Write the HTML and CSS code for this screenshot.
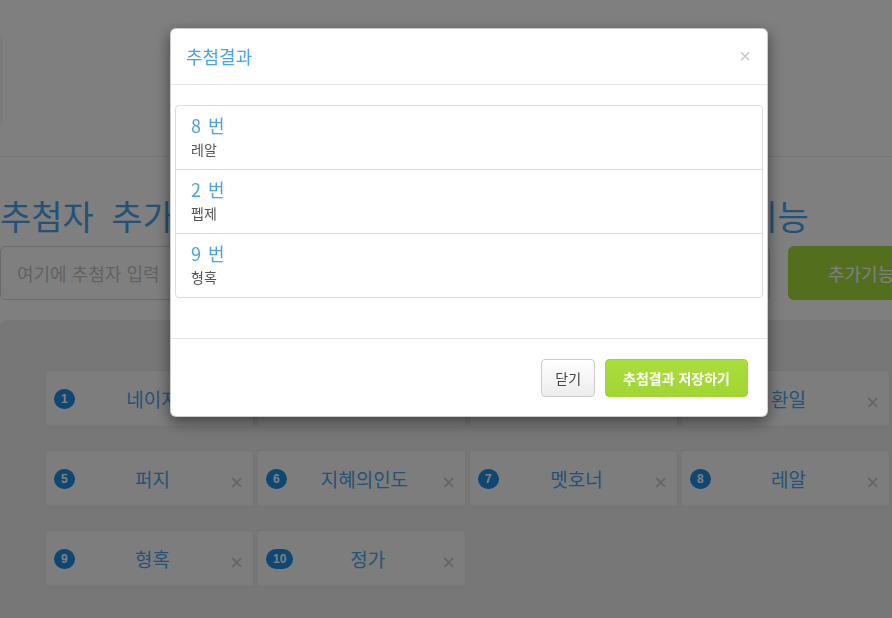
FILE: index.html
```html
<!DOCTYPE html>
<html lang="ko">
<head>
<meta charset="utf-8">
<title>추첨</title>
<link rel="stylesheet" href="styles.css">
</head>
<body>
<div class="page">
  <div class="top"><div class="strip"></div></div>
  <div class="divider"></div>
  <h1 class="title">추첨자 추가하기 - 이름을 입력 뒤에 추첨 및 추가기능</h1>
  <div class="add-row">
    <input class="name-input" type="text" placeholder="여기에 추첨자 입력">
    <button class="btn-extra">추가기능</button>
  </div>
  <div class="board">
    <div class="cards">
      <div class="card"><span class="badge">1</span><span class="name">네이지</span><span class="x">×</span></div>
      <div class="card"><span class="badge">2</span><span class="name">펩제</span><span class="x">×</span></div>
      <div class="card"><span class="badge">3</span><span class="name">하루</span><span class="x">×</span></div>
      <div class="card"><span class="badge">4</span><span class="name">환일</span><span class="x">×</span></div>
      <div class="card"><span class="badge">5</span><span class="name">퍼지</span><span class="x">×</span></div>
      <div class="card"><span class="badge">6</span><span class="name">지혜의인도</span><span class="x">×</span></div>
      <div class="card"><span class="badge">7</span><span class="name">멧호너</span><span class="x">×</span></div>
      <div class="card"><span class="badge">8</span><span class="name">레알</span><span class="x">×</span></div>
      <div class="card"><span class="badge">9</span><span class="name">형혹</span><span class="x">×</span></div>
      <div class="card"><span class="badge">10</span><span class="name">정가</span><span class="x">×</span></div>
    </div>
  </div>
</div>

<div class="backdrop">
  <div class="modal">
    <div class="modal-header">
      <h4 class="modal-title">추첨결과</h4>
      <span class="modal-close">×</span>
    </div>
    <div class="modal-body">
      <div class="list">
        <div class="item"><div class="item-num">8 번</div><div class="item-name">레알</div></div>
        <div class="item"><div class="item-num">2 번</div><div class="item-name">펩제</div></div>
        <div class="item"><div class="item-num">9 번</div><div class="item-name">형혹</div></div>
      </div>
    </div>
    <div class="modal-footer">
      <button class="btn btn-default">닫기</button>
      <button class="btn btn-save">추첨결과 저장하기</button>
    </div>
  </div>
</div>
</body>
</html>
```
FILE: styles.css
```css
html, body {
  margin: 0;
  padding: 0;
  overflow: hidden;
  height: 100%;
}
body {
  font-family: "Noto Sans CJK KR", "Noto Sans", sans-serif;
  font-size: 14px;
  color: #333;
  background: #fff;
}
.page {
  width: 1100px;
}
.top {
  height: 156px;
  display: flex;
  align-items: flex-start;
}
.strip {
  width: 3px;
  height: 88px;
  margin-top: 37px;
  background: #f2f2f2;
}
.divider {
  height: 1px;
  background: #ebebeb;
}
.title {
  margin: 39px 0 10px;
  font-size: 34px;
  line-height: 40px;
  font-weight: 400;
  color: #45a6ee;
  white-space: nowrap;
  word-spacing: 8px;
}
.add-row {
  display: flex;
  gap: 18px;
  align-items: stretch;
}
.name-input {
  box-sizing: border-box;
  width: 770px;
  height: 54px;
  border: 1px solid #d4d4d4;
  border-radius: 6px;
  padding: 0 16px;
  font-family: inherit;
  font-size: 18px;
  background: #fff;
}
.name-input::placeholder {
  color: #c4c4c4;
}
.btn-extra {
  width: 260px;
  height: 54px;
  border: none;
  border-radius: 6px;
  background: #a6dc3a;
  color: #fff;
  font-family: inherit;
  font-size: 18px;
  text-align: left;
  padding-left: 40px;
}
.board {
  margin-top: 20px;
  background: #eeeeee;
  border-radius: 6px;
  padding: 50px 0 60px 45px;
}
.cards {
  display: grid;
  grid-template-columns: repeat(4, 209px);
  column-gap: 3px;
  row-gap: 23px;
}
.card {
  box-sizing: border-box;
  height: 57px;
  background: #fbfbfb;
  border: 1px solid #e8e8e8;
  border-radius: 3px;
  display: flex;
  align-items: center;
  padding: 0 10px 0 8px;
}
.badge {
  box-sizing: border-box;
  min-width: 20px;
  height: 20px;
  padding: 0 7px;
  border-radius: 10px;
  background: #1f8ee6;
  color: #fff;
  font-family: "Liberation Sans", Arial, sans-serif;
  font-weight: 700;
  font-size: 12px;
  line-height: 20px;
  text-align: center;
}
.name {
  flex: 1;
  text-align: center;
  font-size: 19px;
  color: #4aa6ee;
  line-height: 24px;
}
.x {
  font-family: "Liberation Sans", Arial, sans-serif;
  font-size: 22px;
  line-height: 20px;
  color: #c6c6c6;
  padding-top: 8px;
}

.backdrop {
  position: fixed;
  inset: 0;
  background: rgba(0, 0, 0, 0.5);
  padding: 28px 0 0 170px;
}
.modal {
  width: 598px;
  box-sizing: border-box;
  background: #fff;
  border: 1px solid rgba(0, 0, 0, 0.2);
  border-radius: 6px;
  box-shadow: 0 5px 15px rgba(0, 0, 0, 0.5);
}
.modal-header {
  display: flex;
  align-items: center;
  justify-content: space-between;
  padding: 14px 16px 15px 15px;
  border-bottom: 1px solid #e5e5e5;
}
.modal-title {
  margin: 0;
  font-size: 18px;
  line-height: 26px;
  font-weight: 400;
  color: #4ba3e3;
}
.modal-close {
  font-family: "Liberation Sans", Arial, sans-serif;
  font-size: 20px;
  line-height: 20px;
  color: #c8c8c8;
}
.modal-body {
  padding: 20px 4px;
}
.list {
  border: 1px solid #ddd;
  border-radius: 4px;
  margin-bottom: 20px;
}
.item {
  padding: 9px 15px 10px;
  border-top: 1px solid #ddd;
}
.item:first-child {
  border-top: none;
}
.item-num {
  font-size: 18px;
  line-height: 20px;
  color: #4ba3e3;
  margin-bottom: 4px;
  word-spacing: 2px;
}
.item-name {
  font-size: 14px;
  line-height: 20px;
  color: #555;
}
.modal-footer {
  display: flex;
  justify-content: flex-end;
  gap: 10px;
  padding: 20px 19px 19px;
  border-top: 1px solid #e5e5e5;
}
.btn {
  height: 38px;
  box-sizing: border-box;
  padding: 0 13px;
  border-radius: 4px;
  font-family: inherit;
  font-size: 14px;
  line-height: 20px;
}
.btn-default {
  background: linear-gradient(#ffffff, #ececec);
  border: 1px solid #cccccc;
  color: #444;
}
.btn-save {
  padding: 0 17px;
  background: linear-gradient(#a9de3c, #a0d534);
  border: 1px solid #9fd435;
  color: #fff;
  font-weight: 700;
}
```
